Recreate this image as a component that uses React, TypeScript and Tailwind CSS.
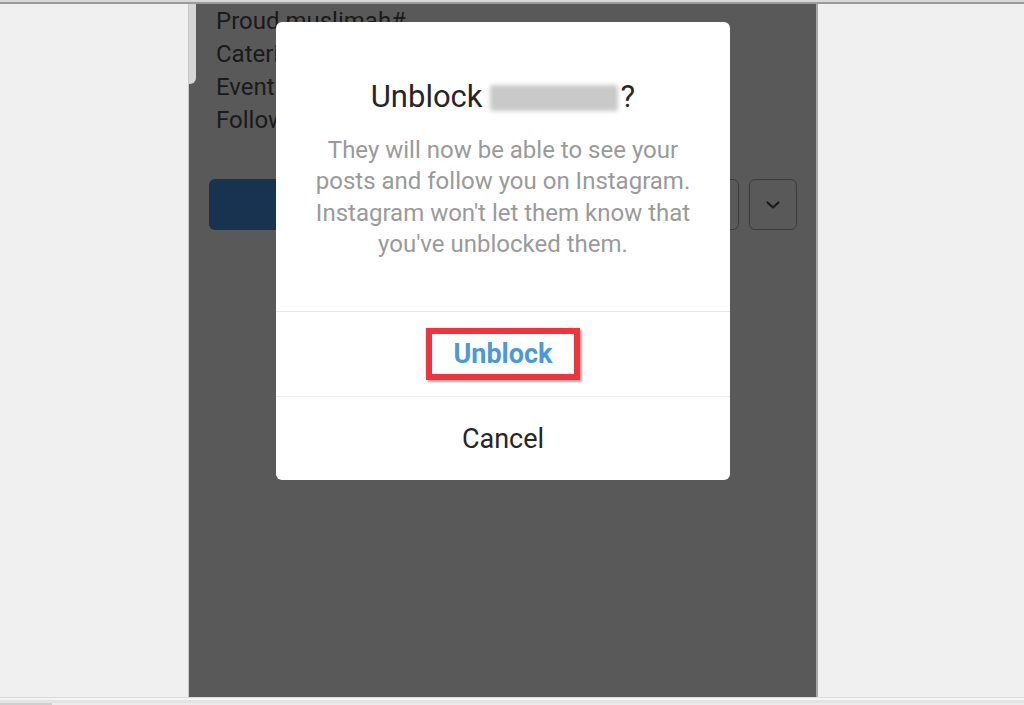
import React from "react";

export default function App() {
  return (
    <div
      className="w-[1024px] h-[705px] bg-[#f0f0f0] flex flex-col overflow-hidden"
      style={{ fontFamily: "Roboto, 'Noto Sans', sans-serif" }}
    >
      <div className="h-[4px] flex flex-col">
        <div className="h-[2px] bg-[#d8d8d8]" />
        <div className="h-[2px] bg-[#9a9a9a]" />
      </div>
      <div className="flex h-[693px]">
        <div className="w-[188px] bg-[#f0f0f0]" />
        <div className="relative w-[630px] bg-[#595959] border-l border-[#c8c8c8] border-r-2 border-r-[#a8a8a8]">
          {/* scroll indicator */}
          <div className="absolute left-0 top-0 w-[7px] h-[80px] bg-[#d6d6d6] rounded-br-[6px]" />
          {/* dimmed profile content */}
          <div className="pl-[27px] pt-[1px] text-[24px] leading-[33px] text-[#1a1a1a]">
            <div>Proud muslimah#</div>
            <div>Catering services</div>
            <div>Events planning</div>
            <div>Follow us</div>
          </div>
          <div className="flex gap-[10px] pl-[20px] mt-[42px]">
            <div className="w-[262px] h-[51px] rounded-[6px] bg-[#17334f]" />
            <div className="w-[258px] h-[51px] rounded-[6px] border border-[#3c3c3c]" />
            <div className="w-[48px] h-[51px] rounded-[6px] border border-[#3c3c3c] flex items-center justify-center">
              <svg width="16" height="10" viewBox="0 0 16 10" fill="none">
                <path d="M2.5 2.5 L8 7.5 L13.5 2.5" stroke="#1a1a1a" strokeWidth="2.2" strokeLinecap="round" strokeLinejoin="round" />
              </svg>
            </div>
          </div>

          {/* dialog */}
          <div className="absolute left-[87px] top-[18px] w-[454px] h-[458px] bg-white rounded-[6px] flex flex-col">
            <div className="flex flex-col items-center pt-[57px] h-[289px]">
              <div className="flex items-center text-[31px] leading-[36px] text-[#262626]">
                <span>Unblock</span>
                <span className="ml-[7px] w-[128px] h-[26px] bg-[#c9c9c9] blur-[2px] rounded-[2px] mt-[2px]" />
                <span className="ml-[3px]">?</span>
              </div>
              <div className="mt-[20px] text-[24px] leading-[31.3px] text-[#9a9a9a] text-center whitespace-nowrap">
                They will now be able to see your
                <br />
                posts and follow you on Instagram.
                <br />
                Instagram won't let them know that
                <br />
                you've unblocked them.
              </div>
            </div>
            <div className="h-[85px] border-t border-[#e6e6e6] flex items-center justify-center">
              <div className="w-[154px] h-[52px] border-[6px] border-[#f2323c] shadow-[2px_2px_2px_rgba(0,0,0,0.35)] flex items-center justify-center">
                <span className="text-[27px] font-bold text-[#4b98dd] leading-none pt-[1px]">Unblock</span>
              </div>
            </div>
            <div className="flex-1 border-t border-[#ececec] flex items-center justify-center">
              <span className="text-[27px] text-[#262626] leading-none pt-[2px]">Cancel</span>
            </div>
          </div>
        </div>
        <div className="flex-1 bg-[#f0f0f0]" />
      </div>
      <div className="flex-1 flex flex-col">
        <div className="h-[1px] bg-[#dcdcdc]" />
        <div className="h-[2px] bg-[#f4f4f4]" />
        <div className="h-[3px] bg-[#e4e4e4]" />
        <div className="flex-1 bg-[#ececec] relative">
          <div className="absolute left-0 top-0 w-[52px] h-full bg-[#cfcfcf]" />
        </div>
      </div>
    </div>
  );
}
